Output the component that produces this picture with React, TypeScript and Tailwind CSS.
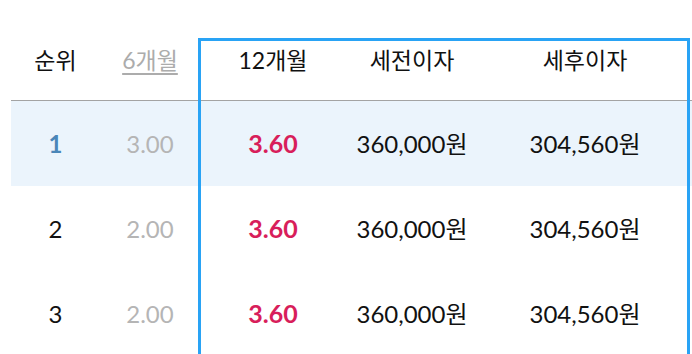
import React from "react"

type Row = {rank: number; six: string; twelve: string; pre: string; post: string}

const rows: Row[] = [
    {rank: 1, six: "3.00", twelve: "3.60", pre: "360,000원", post: "304,560원"},
    {rank: 2, six: "2.00", twelve: "3.60", pre: "360,000원", post: "304,560원"},
    {rank: 3, six: "2.00", twelve: "3.60", pre: "360,000원", post: "304,560원"},
]

const cols = "grid grid-cols-[89px_100px_146px_132px_214px]"

export default function App() {
    return (
        <div className="w-[692px] h-[354px] overflow-hidden bg-white pl-[11px] font-['Lato','Noto_Sans_CJK_KR',sans-serif]">
            <div className="relative">
                {/* header */}
                <div className={`${cols} h-[81px] mt-[20px] border-b border-[#a3a3a3] text-[23px] text-[#111]`}>
                    <div className="flex items-center justify-center">순위</div>
                    <div className="flex items-center justify-center">
                        <span className="underline underline-offset-4 text-[#acacac]">6개월</span>
                    </div>
                    <div className="flex items-center justify-center">12개월</div>
                    <div className="flex items-center justify-center">세전이자</div>
                    <div className="flex items-center justify-center">세후이자</div>
                </div>

                {/* body rows */}
                {rows.map((row) => (
                    <div
                        key={row.rank}
                        className={`${cols} h-[85px] text-[24px] ${row.rank === 1 ? "bg-[#ebf4fc]" : "bg-white"}`}
                    >
                        <div
                            className={`flex items-center justify-center ${
                                row.rank === 1 ? "text-[#4a86b8] font-bold" : "text-[#111]"
                            }`}
                        >
                            {row.rank}
                        </div>
                        <div className="flex items-center justify-center text-[#b5b5b5]">{row.six}</div>
                        <div className="flex items-center justify-center font-bold text-[25px] text-[#d81e5b]">{row.twelve}</div>
                        <div className="flex items-center justify-center text-[#111]">{row.pre}</div>
                        <div className="flex items-center justify-center text-[#111]">{row.post}</div>
                    </div>
                ))}

                {/* highlight frame over the 12 month group */}
                <div className="absolute left-[187px] top-[18px] w-[492px] h-[400px] border-[3px] border-[#29a3f5] pointer-events-none" />
            </div>
        </div>
    )
}
